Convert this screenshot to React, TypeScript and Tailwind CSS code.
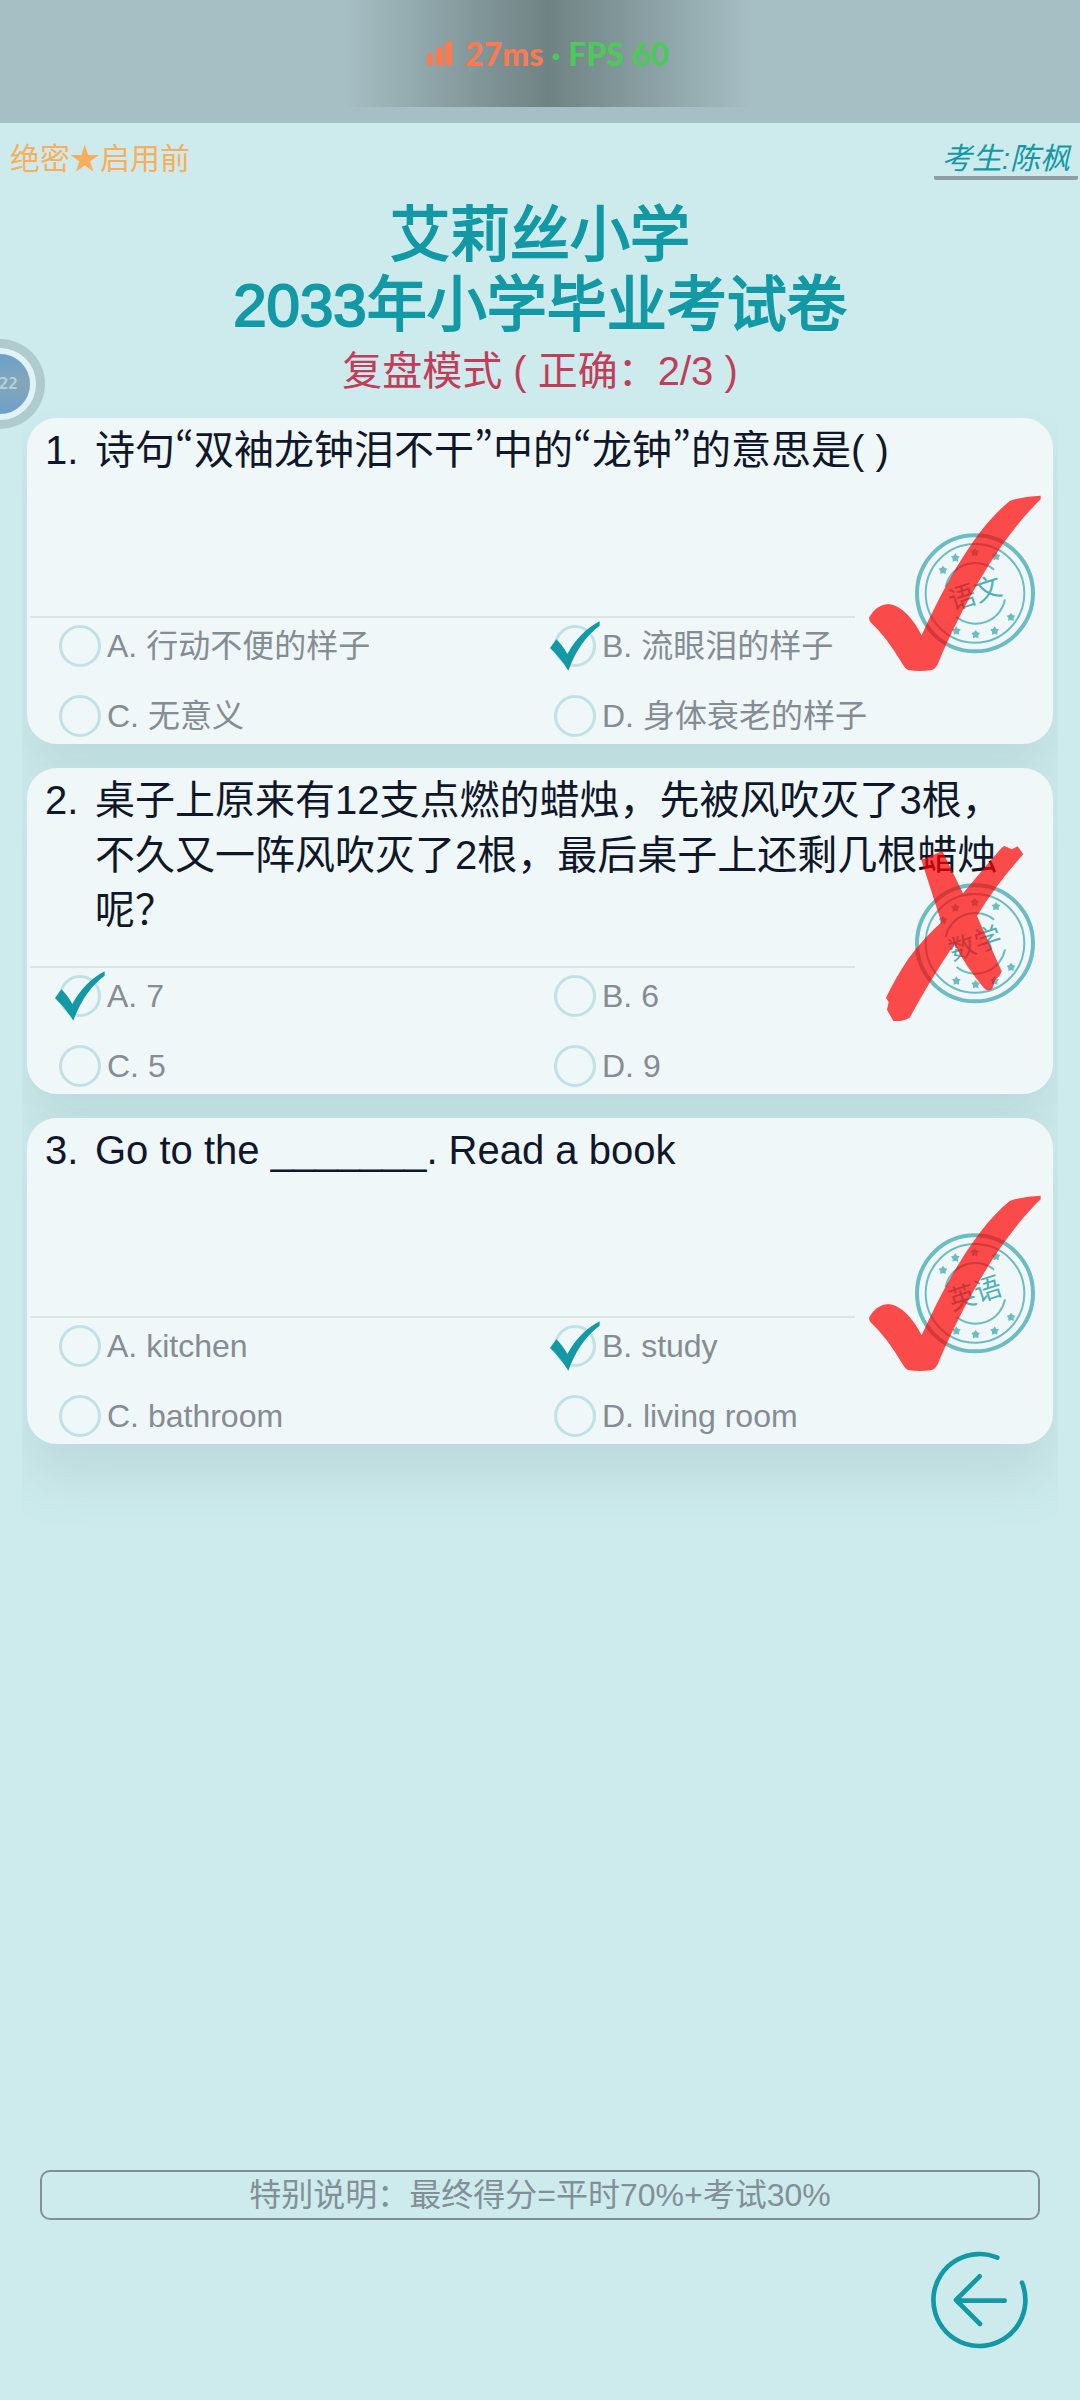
type Question = {
  id: number;
  subject: string;
  title: string;
  options: string[];
  picked: number;
  correct: boolean;
};

const LETTERS = ["A", "B", "C", "D"];

const QUESTIONS: Question[] = [
  {
    id: 1,
    subject: "语文",
    title: "诗句“双袖龙钟泪不干”中的“龙钟”的意思是( )",
    options: ["行动不便的样子", "流眼泪的样子", "无意义", "身体衰老的样子"],
    picked: 1,
    correct: true,
  },
  {
    id: 2,
    subject: "数学",
    title:
      "桌子上原来有12支点燃的蜡烛，先被风吹灭了3根，不久又一阵风吹灭了2根，最后桌子上还剩几根蜡烛呢？",
    options: ["7", "6", "5", "9"],
    picked: 0,
    correct: false,
  },
  {
    id: 3,
    subject: "英语",
    title: "Go to the _______. Read a book",
    options: ["kitchen", "study", "bathroom", "living room"],
    picked: 1,
    correct: true,
  },
];

// star centres inside the stamp ring
const STARS = [
  [309, 299],
  [346, 262],
  [404, 246],
  [468, 258],
  [513, 440],
  [464, 481],
  [407, 492],
  [349, 481],
];

const StatusBar = () => (
  <header className="h-[123px] bg-[#a6bfc4] pl-4">
    <div className="mx-auto flex h-[107px] w-[408px] items-center justify-center bg-linear-to-r from-[#a6bfc4] via-[#6f8284] to-[#a6bfc4] font-['Lato'] text-[32px] font-black">
      <svg viewBox="0 0 26 26" className="mr-3 size-[26px] fill-[#fb7a50]">
        <rect x="0" y="12" width="6" height="13" rx="3" />
        <rect x="9" y="6" width="7" height="19" rx="3" />
        <rect x="18" y="0" width="7" height="25" rx="3" />
      </svg>
      <span className="text-[#fb7a50]">27ms</span>
      <span className="px-2 text-[#4cc958]">·</span>
      <span className="text-[#4cc958]">FPS 60</span>
    </div>
  </header>
);

const FloatBall = () => (
  <button
    aria-label="悬浮球"
    className="absolute top-[339px] -left-[45px] flex size-[90px] items-center justify-center rounded-full bg-[#b0cbcd]"
  >
    <span className="flex size-[72px] items-center justify-end rounded-full border-[6px] border-[#e0f3fa] bg-linear-to-b from-[#6c9fca] via-[#84a7b8] to-[#6c9fca] pr-3 font-['DejaVu_Sans_Mono'] text-[16px] font-bold text-[#b5d0dd]">
      22
    </span>
  </button>
);

const Tick = () => (
  <svg
    viewBox="91 92 150 150"
    className="pointer-events-none absolute -top-1 -left-1 size-[50px] fill-[#1299a5]"
  >
    <path d="M91 173L110 147Q128 164 143 191Q180 124 240 93V106Q178 152 146 241Q122 202 91 173Z" />
  </svg>
);

const Result = ({subject, correct}: {subject: string; correct: boolean}) => (
  <svg
    viewBox="75 65 540 540"
    role="img"
    aria-label={correct ? "正确" : "错误"}
    className="pointer-events-none absolute top-[74px] right-2 size-[180px]"
  >
    <g fill="none" stroke="#6bbcc4">
      <circle cx="405" cy="369" r="174" strokeWidth="12" />
      <circle cx="405" cy="369" r="148" strokeWidth="6" />
      <path
        d="M317 350A90 90 0 0 1 462 298M350 440A90 90 0 0 0 495 387"
        strokeWidth="6"
      />
    </g>
    {STARS.map(([x, y]) => (
      <path
        key={`${x}-${y}`}
        transform={`translate(${x} ${y})`}
        d="M0-13L5-6L13-4L8 3L8 12L0 9L-8 12L-8 3L-13-4L-5-6Z"
        fill="#6bbcc4"
      />
    ))}
    <text
      x="405"
      y="398"
      transform="rotate(-18 405 369)"
      textAnchor="middle"
      fontSize="81"
      fill="#4fb0ba"
    >
      {subject}
    </text>
    <path
      d={
        correct
          ? "M88 440Q110 403 145 401C185 405 222 448 245 495C310 350 405 175 510 91Q555 77 602 76V87C480 205 370 400 296 575Q288 597 272 600Q235 604 204 599Q194 594 188 582Q140 500 91 455Q86 448 88 440Z"
          : "M244 119L307 92L369 219Q430 145 485 82L493 77L516 87L533 78L550 102Q470 190 411 287L485 453L479 466L466 478L457 505Q443 516 431 502Q375 435 343 371Q270 480 209 592Q190 604 160 602L141 568L146 545L138 532Q165 475 205 415Q250 355 304 306Z"
      }
      fill="#ff0000"
      fillOpacity="0.7"
    />
  </svg>
);

// curly quotes need a face with proportional CJK quotes
const QuestionTitle = ({title}: {title: string}) => (
  <h2>
    {title.split(/([“”])/).map((part, i) =>
      part === "“" || part === "”" ? (
        <span key={i} lang="ko" className="font-['Noto_Sans_CJK_KR'] leading-none">
          {part}
        </span>
      ) : (
        part
      ),
    )}
  </h2>
);

const QuestionCard = ({question}: {question: Question}) => (
  <section className="relative rounded-[30px] bg-[#eff7f8] shadow-[0_36px_50px_rgba(100,130,130,0.15)]">
    <div className="flex min-h-[198px] pt-[5px] pr-[40px] pl-[18px] text-[40px] leading-[55px] text-[#10172a]">
      <span className="w-[50px] shrink-0">{question.id}.</span>
      <QuestionTitle title={question.title} />
    </div>
    <div className="mr-[198px] ml-[3px] h-[2px] bg-[#dbe6e7]" />
    <div className="grid grid-cols-2 gap-y-[14px] pr-1 pl-8">
      {question.options.map((option, i) => (
        <label
          key={option}
          className="flex h-[56px] items-center gap-[6px] text-[32px] text-[#858c93]"
        >
          <span className="relative size-[42px] shrink-0">
            <input
              type="radio"
              name={`question-${question.id}`}
              checked={question.picked === i}
              readOnly
              className="block size-[42px] appearance-none rounded-full border-3 border-[#c0e1e5]"
            />
            {question.picked === i && <Tick />}
          </span>
          <span>
            {LETTERS[i]}. {option}
          </span>
        </label>
      ))}
    </div>
    <Result subject={question.subject} correct={question.correct} />
  </section>
);

export default function App() {
  const score = QUESTIONS.filter((q) => q.correct).length;

  return (
    <div
      lang="zh-CN"
      className="relative flex min-h-screen flex-col overflow-x-hidden bg-[#cdebed] font-['Liberation_Sans','Noto_Sans_CJK_SC',sans-serif]"
    >
      <StatusBar />

      <div className="flex h-[78px] justify-between pt-4 text-[30px] leading-10">
        <span className="pl-[10px] text-[#f9ae5c]">绝密★启用前</span>
        <span className="mr-[2px] h-[41px] rounded-xs border-b-4 border-[#8d9fa5] px-2 text-[#1299a5] italic">
          考生:陈枫
        </span>
      </div>

      <h1 className="text-center text-[60px] leading-[70px] text-[#1299a5] [-webkit-text-stroke:2px_#1299a5]">
        艾莉丝小学
        <br />
        2033年小学毕业考试卷
      </h1>
      <p className="pb-[17px] text-center text-[40px] leading-[60px] text-[#c13d59]">
        复盘模式 ( 正确：{score}/{QUESTIONS.length} )
      </p>

      <main className="mx-[22px] flex flex-col gap-6 overflow-x-clip px-[5px]">
        {QUESTIONS.map((question) => (
          <QuestionCard key={question.id} question={question} />
        ))}
      </main>

      <footer className="mt-auto px-10 pb-[50px]">
        <p className="rounded-[10px] border-2 border-[#838f96] text-center text-[32px] leading-[46px] text-[#838f96]">
          特别说明：最终得分=平时70%+考试30%
        </p>
        <div className="flex justify-end pt-[30px] pr-[10px]">
          <button aria-label="返回">
            <svg
              viewBox="271 299 300 300"
              className="size-[100px] fill-none stroke-[#1299a5]"
              strokeWidth="14"
              strokeLinecap="round"
              strokeLinejoin="round"
            >
              <path d="M473 322A138 138 0 1 0 547 397M420 378L349 449L421 521M354 450L495 451" />
            </svg>
          </button>
        </div>
      </footer>

      <FloatBall />
    </div>
  );
}
